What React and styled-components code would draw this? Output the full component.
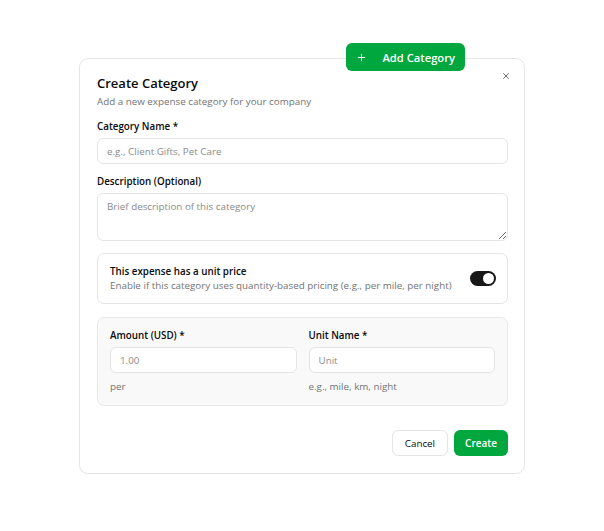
import React, { useState } from 'react'
import styled, { createGlobalStyle } from 'styled-components'

const GlobalStyle = createGlobalStyle`
  * { box-sizing: border-box; }
  html, body { margin: 0; padding: 0; background: #ffffff; }
  body {
    font-family: 'Open Sans', 'Noto Sans', sans-serif;
    color: #0a0a0a;
  }
`

const Page = styled.div`
  position: relative;
  width: 604px;
  height: 531px;
`

const Trigger = styled.div`
  position: relative;
  z-index: 2;
  display: flex;
  justify-content: flex-end;
  padding: 43px 139px 0 0;
`

const GreenButton = styled.button`
  display: flex;
  align-items: center;
  gap: ${(p) => (p.$icon ? '15px' : '0')};
  height: ${(p) => p.$h || 26}px;
  padding: 0 ${(p) => p.$pr || 11}px 0 ${(p) => p.$pl || 11}px;
  border: none;
  border-radius: 6px;
  background: #00a63e;
  color: #ffffff;
  font-family: inherit;
  font-size: ${(p) => p.$fs || 10}px;
  font-weight: 600;
  cursor: pointer;
`

const Dialog = styled.div`
  position: absolute;
  z-index: 1;
  left: 79px;
  top: 58px;
  width: 446px;
  height: 416px;
  padding: 15px 16px 17px 17px;
  background: #ffffff;
  border: 1px solid #e5e5e5;
  border-radius: 9px;
  display: flex;
  flex-direction: column;
`

const Close = styled.button`
  position: absolute;
  top: 10px;
  right: 11px;
  width: 14px;
  height: 14px;
  padding: 0;
  border: none;
  background: none;
  display: flex;
  align-items: center;
  justify-content: center;
  color: #555;
`

const Title = styled.h2`
  margin: 0;
  font-size: 13px;
  font-weight: 600;
  line-height: 18px;
`

const Subtitle = styled.p`
  margin: 3px 0 0;
  font-size: 9.8px;
  color: #737373;
  line-height: 14px;
`

const Field = styled.div`
  display: flex;
  flex-direction: column;
  margin-top: ${(p) => p.$mt || 0}px;
`

const Label = styled.label`
  font-size: 9.8px;
  font-weight: 600;
  line-height: 14px;
  margin-bottom: 4px;
`

const Input = styled.input`
  height: 26px;
  width: 100%;
  padding: 0 9px;
  border: 1px solid #e5e5e5;
  border-radius: 6px;
  background: #ffffff;
  font-family: inherit;
  font-size: 9.8px;
  color: #0a0a0a;
  outline: none;
  &::placeholder { color: #8a8a8a; }
`

const TextArea = styled.textarea`
  display: block;
  height: 48px;
  width: 100%;
  padding: 6px 9px;
  border: 1px solid #e5e5e5;
  border-radius: 6px;
  font-family: inherit;
  font-size: 9.8px;
  outline: none;
  resize: vertical;
  &::placeholder { color: #8a8a8a; }
`

const ToggleCard = styled.div`
  margin-top: 12px;
  height: 51px;
  padding: 0 11px 0 12px;
  border: 1px solid #e5e5e5;
  border-radius: 7px;
  display: flex;
  align-items: center;
  justify-content: space-between;
`

const ToggleText = styled.div`
  display: flex;
  flex-direction: column;
  padding-top: 1px;
`

const ToggleTitle = styled.span`
  font-size: 9.8px;
  font-weight: 600;
  line-height: 13px;
`

const ToggleHint = styled.span`
  font-size: 9.8px;
  color: #737373;
  line-height: 15px;
`

const Switch = styled.button`
  width: 26px;
  height: 15px;
  padding: 2px;
  border: none;
  border-radius: 8px;
  background: ${(p) => (p.$on ? '#171717' : '#e5e5e5')};
  display: flex;
  justify-content: ${(p) => (p.$on ? 'flex-end' : 'flex-start')};
  cursor: pointer;
`

const Thumb = styled.span`
  width: 11px;
  height: 11px;
  border-radius: 50%;
  background: #ffffff;
`

const UnitCard = styled.div`
  margin-top: 13px;
  height: 89px;
  padding: 11px 12px 0;
  background: #f9f9f9;
  border: 1px solid #e8e8e8;
  border-radius: 7px;
  display: grid;
  grid-template-columns: 1fr 1fr;
  column-gap: 12px;
  align-content: start;
`

const Helper = styled.span`
  margin-top: 7px;
  font-size: 9.8px;
  color: #737373;
  line-height: 14px;
`

const Footer = styled.div`
  margin-top: auto;
  display: flex;
  justify-content: flex-end;
  gap: 6px;
`

const OutlineButton = styled.button`
  height: 26px;
  padding: 0 12px;
  border: 1px solid #e5e5e5;
  border-radius: 6px;
  background: #ffffff;
  font-family: inherit;
  font-size: 9.8px;
  font-weight: 500;
  color: #0a0a0a;
  cursor: pointer;
`

const PlusIcon = () => (
  <svg width="11" height="11" viewBox="0 0 24 24" fill="none" stroke="currentColor" strokeWidth="2.2" strokeLinecap="round">
    <path d="M5 12h14M12 5v14" />
  </svg>
)

const XIcon = () => (
  <svg width="10" height="10" viewBox="0 0 24 24" fill="none" stroke="currentColor" strokeWidth="2" strokeLinecap="round">
    <path d="M18 6 6 18M6 6l12 12" />
  </svg>
)

export default function App() {
  const [on, setOn] = useState(true)
  return (
    <Page>
      <GlobalStyle />
      <Trigger>
        <GreenButton $icon $h={28} $pl={10} $pr={10} $fs={11.2}>
          <PlusIcon />
          Add Category
        </GreenButton>
      </Trigger>
      <Dialog>
        <Close aria-label="Close"><XIcon /></Close>
        <Title>Create Category</Title>
        <Subtitle>Add a new expense category for your company</Subtitle>
        <Field $mt={11}>
          <Label>Category Name *</Label>
          <Input placeholder="e.g., Client Gifts, Pet Care" />
        </Field>
        <Field $mt={11}>
          <Label>Description (Optional)</Label>
          <TextArea placeholder="Brief description of this category" />
        </Field>
        <ToggleCard>
          <ToggleText>
            <ToggleTitle>This expense has a unit price</ToggleTitle>
            <ToggleHint>Enable if this category uses quantity-based pricing (e.g., per mile, per night)</ToggleHint>
          </ToggleText>
          <Switch $on={on} onClick={() => setOn(!on)}><Thumb /></Switch>
        </ToggleCard>
        <UnitCard>
          <Field>
            <Label>Amount (USD) *</Label>
            <Input placeholder="1.00" />
            <Helper>per</Helper>
          </Field>
          <Field>
            <Label>Unit Name *</Label>
            <Input placeholder="Unit" />
            <Helper>e.g., mile, km, night</Helper>
          </Field>
        </UnitCard>
        <Footer>
          <OutlineButton>Cancel</OutlineButton>
          <GreenButton>Create</GreenButton>
        </Footer>
      </Dialog>
    </Page>
  )
}
